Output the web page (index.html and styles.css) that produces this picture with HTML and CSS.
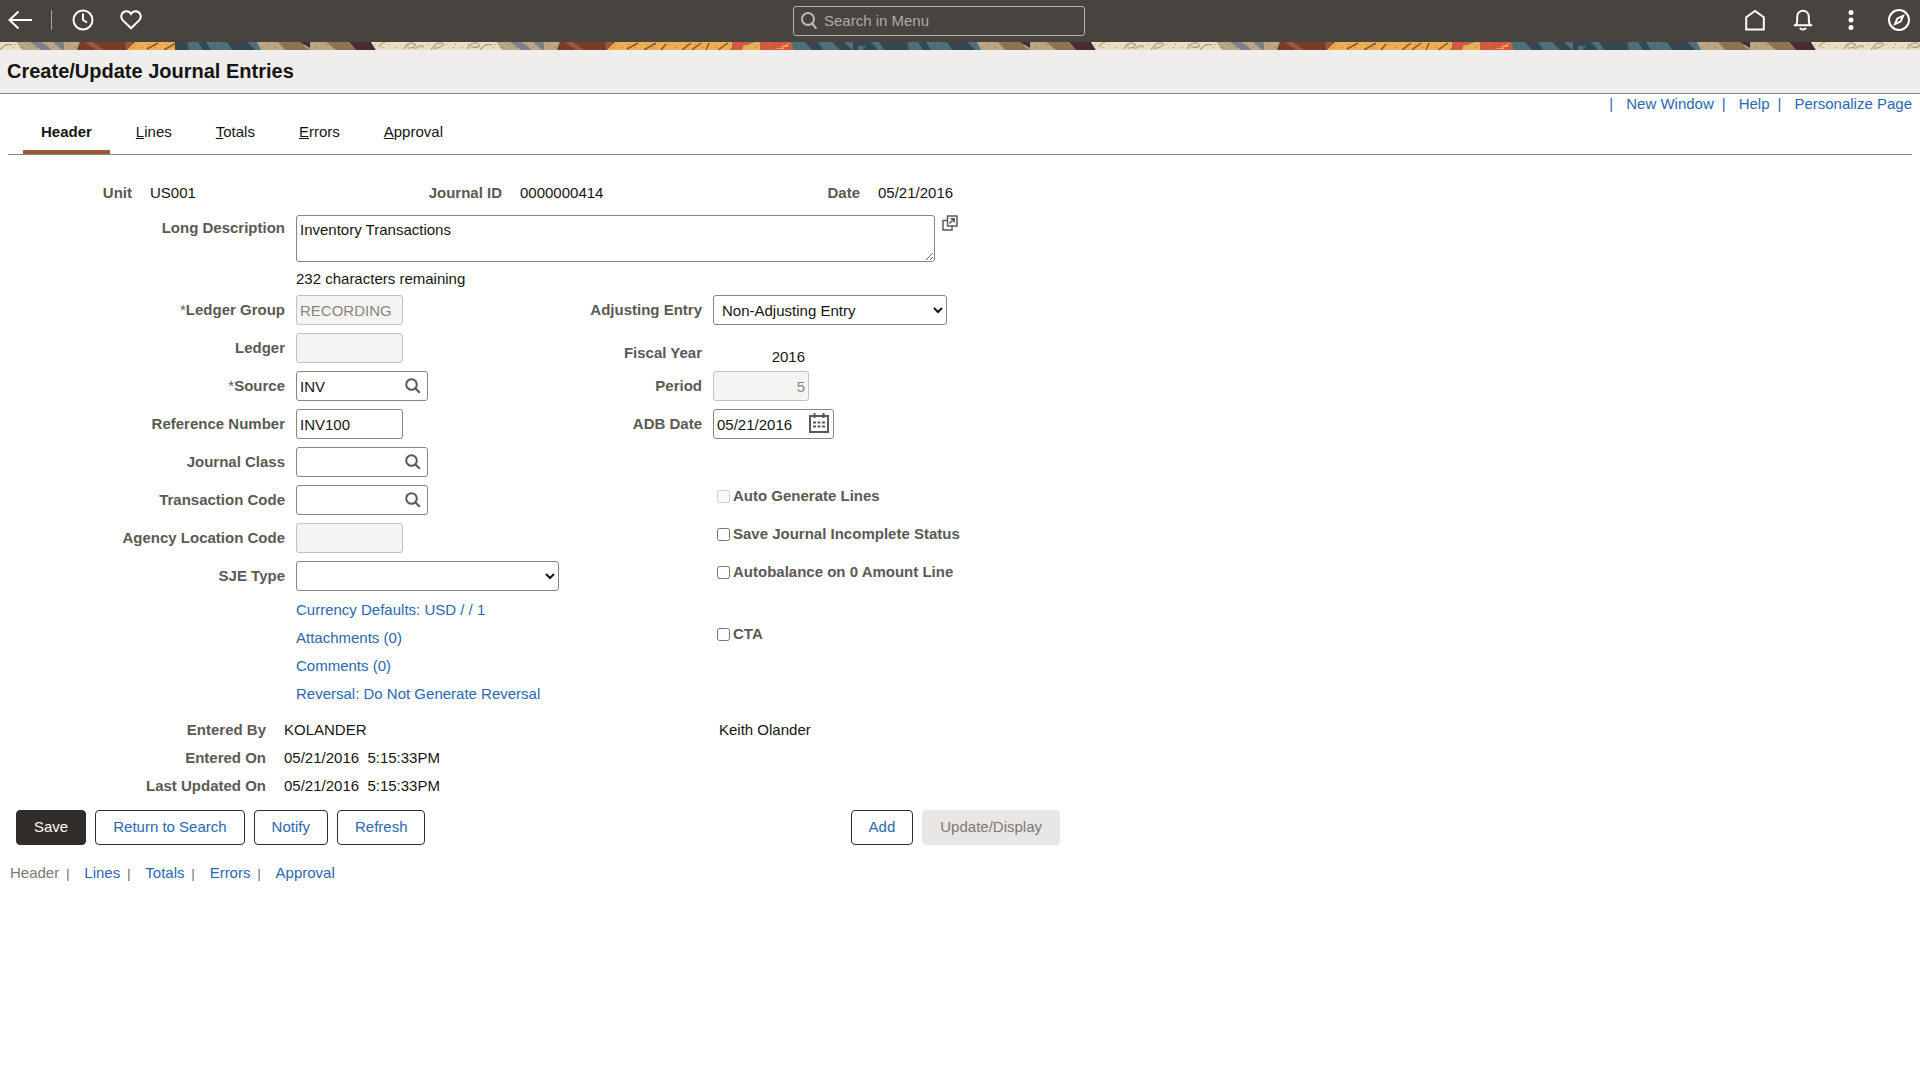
FILE: index.html
```html
<!DOCTYPE html>
<html lang="en">

<head>
  <meta charset="UTF-8">
  <meta name="viewport" content="width=device-width, initial-scale=1">
  <title>Create/Update Journal Entries</title>
  <link rel="stylesheet" href="styles.css">
</head>

<body>
  <header>
    <div class="topbar">
      <div class="topbar-left">
        <button type="button" class="icon-btn" aria-label="Back">
          <svg width="24" height="20" viewBox="0 0 24 20"><path d="M10.500 1.500L1.500 10l9 8.500M1.500 10H24" /></svg>
        </button>
        <span class="divider"></span>
        <button type="button" class="icon-btn" aria-label="Recently visited">
          <svg width="22" height="22" viewBox="0 0 22 22"><circle cx="11" cy="11" r="9.500" /><path d="M11 4.500V11l4 2.500" /></svg>
        </button>
        <button type="button" class="icon-btn" aria-label="Favorites">
          <svg width="22" height="20" viewBox="0 0 22 20"><path d="M11 18.300L2.900 10.400C-.500 6.500 2 1.200 6.300 1.200c2 0 3.700 1 4.700 2.700 1-1.700 2.700-2.700 4.700-2.700 4.300 0 6.800 5.300 3.400 9.200z" /></svg>
        </button>
      </div>
      <div class="menu-search">
        <svg width="16" height="18" viewBox="0 0 16 18"><circle cx="7" cy="7" r="6" /><path d="M11 11.500l4.300 5" /></svg>
        <input type="text" placeholder="Search in Menu" aria-label="Search in Menu">
      </div>
      <div class="topbar-right">
        <button type="button" class="icon-btn" aria-label="Home">
          <svg width="22" height="22" viewBox="0 0 22 22"><path d="M2.200 8.200L11 2l8.800 6.200v12.300H2.200z" /></svg>
        </button>
        <button type="button" class="icon-btn" aria-label="Notifications">
          <svg width="22" height="22" viewBox="0 0 22 22"><path d="M1.800 16.200h18.400M4 16c1-1.500 1.200-3 1.200-5V7.500a5.800 5.800 0 0 1 11.600 0V11c0 2 .200 3.500 1.200 5M8 18.800c1 2.200 5 2.200 6 0" /></svg>
        </button>
        <button type="button" class="icon-btn" aria-label="Actions">
          <svg class="dots" width="22" height="22" viewBox="0 0 22 22"><circle cx="11" cy="3.500" r="2.500" /><circle cx="11" cy="11" r="2.500" /><circle cx="11" cy="18.500" r="2.500" /></svg>
        </button>
        <button type="button" class="icon-btn" aria-label="NavBar">
          <svg width="22" height="22" viewBox="0 0 22 22"><circle cx="11" cy="11" r="10" /><path d="M15 7l-2.400 5.600L7 15l2.400-5.600z" /></svg>
        </button>
      </div>
    </div>
    <!-- woven colour strip, repeats every 720px -->
    <svg class="strip" width="100%" height="8" aria-hidden="true">
      <defs>
        <pattern id="weave" x="175" y="0" width="720" height="8" patternUnits="userSpaceOnUse">
          <rect width="720" height="8" fill="#4d717b" />
          <path fill="#34464e" d="M0 0h12l2 8H0zM23 0h8l5 8h-8zM52 0h20l8 8H57z" />
          <path fill="#b9a684" d="M82 0h122v8H86z" />
          <path fill="#8d7551" d="M103 0h33l-8 4 8 4h-26zM151 0h22l8 8h-20z" />
          <path fill="#4a2c30" d="M125 0h10v6zM174 0h22l5 8h-20z" />
          <path fill="#e8dfc2" d="M196 0h126l5 8H201z" />
          <g fill="none" stroke="#bcab86" stroke-width="1.500">
            <path d="M204 5q3-5 7-5M229 7q7-9 10-5t-6 4M240 7q4-4 9-3M256 8q6-9 11-7t-8 6M292 7q6-9 11-5t-7 3M305 8q5-7 12-5" />
          </g>
          <path fill="#b9a684" d="M322 0h63l-3 8h-55z" />
          <path fill="#817f85" d="M335 0h12l10 8h-11zM358 0h11v8h-2z" />
          <path fill="#793d27" d="M385 0h55l-8 8h-50z" />
          <path fill="#9c5834" d="M390 0h8l11 8h-8zM430 0h8l-4 8h-3z" />
          <path fill="#ebae54" d="M440 0h120v8H432z" />
          <g fill="none" stroke="#8f5428" stroke-width="1.500">
            <path d="M452 7l11-6M469 8l12-7M486 8l5-6M507 8l9-7M517 8l9-7M531 8l3-7M543 8l10-7M556 8l4-5" />
          </g>
          <path fill="#d35b42" d="M557 0h20l-6 3-4 5h-10zM585 0h31l3 8h-34z" />
          <path fill="#ebae54" d="M568 4l12-4h5v8h-18zM605 5l10-4-3 4zM600 7l9-2v2z" />
          <path fill="#34464e" d="M630 0h13l5 8h-11zM657 0h12l8 8h-12zM678 0h18l7 8h-25zM704 0h16v8h-11z" />
          <path fill="#4d717b" d="M683 4h8l-3 4h-5z" />
          <g fill="none" stroke="#4b3b30" stroke-dasharray="1 12 1 17 1 8" opacity=".5">
            <path d="M0 2.500h720M7 5.500h713" />
          </g>
        </pattern>
        <pattern id="weave-start" href="#weave" x="-305" />
      </defs>
      <rect width="100%" height="8" fill="url(#weave)" />
      <rect width="175" height="8" fill="url(#weave-start)" />
    </svg>
    <h1>Create/Update Journal Entries</h1>
  </header>

  <main>
    <div class="page-links">
      <span>|</span><a href="#">New Window</a><span>|</span><a href="#">Help</a><span>|</span><a href="#">Personalize Page</a>
    </div>
    <nav class="tabs">
      <a href="#" class="active">Header</a>
      <a href="#"><u>L</u>ines</a>
      <a href="#"><u>T</u>otals</a>
      <a href="#"><u>E</u>rrors</a>
      <a href="#"><u>A</u>pproval</a>
    </nav>

    <form>
      <div class="keys">
        <span class="label">Unit</span><span>US001</span>
        <span class="label">Journal ID</span><span>0000000414</span>
        <span class="label">Date</span><span>05/21/2016</span>
      </div>

      <div class="description">
        <label for="descr">Long Description</label>
        <textarea id="descr">Inventory Transactions</textarea>
        <button type="button" class="popup" aria-label="Open in popup">
          <svg width="16" height="16" viewBox="0 0 16 16"><path d="M5.500 1h9.500v10H5.500zM5 5.500H1V15h9v-3.500M7.500 8.500l4.500-4.500M8.500 3.800H12.200V7.500" /></svg>
        </button>
        <span class="remaining">232 characters remaining</span>
      </div>

      <div class="columns">
        <div>
          <div class="fields">
            <label for="ledgerGroup"><span class="required">*</span>Ledger Group</label>
            <input type="text" id="ledgerGroup" class="short" value="RECORDING" disabled>
            <label for="ledger">Ledger</label>
            <input type="text" id="ledger" class="short" disabled>
            <label for="source"><span class="required">*</span>Source</label>
            <div class="lookup">
              <input type="text" id="source" value="INV">
              <button type="button" aria-label="Look up Source"><svg width="16" height="16" viewBox="0 0 16 16"><circle cx="6.500" cy="6.500" r="5.300" /><path d="M10.500 10.500l4.300 4.300" /></svg></button>
            </div>
            <label for="refNumber">Reference Number</label>
            <input type="text" id="refNumber" class="short" value="INV100">
            <label for="journalClass">Journal Class</label>
            <div class="lookup">
              <input type="text" id="journalClass">
              <button type="button" aria-label="Look up Journal Class"><svg width="16" height="16" viewBox="0 0 16 16"><circle cx="6.500" cy="6.500" r="5.300" /><path d="M10.500 10.500l4.300 4.300" /></svg></button>
            </div>
            <label for="transCode">Transaction Code</label>
            <div class="lookup">
              <input type="text" id="transCode">
              <button type="button" aria-label="Look up Transaction Code"><svg width="16" height="16" viewBox="0 0 16 16"><circle cx="6.500" cy="6.500" r="5.300" /><path d="M10.500 10.500l4.300 4.300" /></svg></button>
            </div>
            <label for="agencyCode">Agency Location Code</label>
            <input type="text" id="agencyCode" class="short" disabled>
            <label for="sjeType">SJE Type</label>
            <select id="sjeType" class="sje">
              <option></option>
            </select>
          </div>
          <ul class="journal-links">
            <li><a href="#">Currency Defaults: USD / / 1</a></li>
            <li><a href="#">Attachments (0)</a></li>
            <li><a href="#">Comments (0)</a></li>
            <li><a href="#">Reversal: Do Not Generate Reversal</a></li>
          </ul>
        </div>

        <div>
          <div class="fields fields-right">
            <label for="adjusting">Adjusting Entry</label>
            <select id="adjusting" class="adjusting">
              <option>Non-Adjusting Entry</option>
            </select>
            <span class="label year-label">Fiscal Year</span>
            <span class="year">2016</span>
            <label for="period">Period</label>
            <input type="text" id="period" class="period" value="5" disabled>
            <label for="adbDate">ADB Date</label>
            <div class="date">
              <input type="text" id="adbDate" value="05/21/2016">
              <button type="button" aria-label="Choose a date">
                <svg width="20" height="20" viewBox="0 0 20 20"><path d="M1 3h18v16H1zM5.500 0v5M14.500 0v5" /><path class="days" d="M4 9.500h12M4 13.500h12" /></svg>
              </button>
            </div>
          </div>
          <div class="checks">
            <div><input type="checkbox" id="autoGen" disabled><label for="autoGen">Auto Generate Lines</label></div>
            <div><input type="checkbox" id="incomplete"><label for="incomplete">Save Journal Incomplete Status</label></div>
            <div><input type="checkbox" id="autobalance"><label for="autobalance">Autobalance on 0 Amount Line</label></div>
            <div class="cta"><input type="checkbox" id="cta"><label for="cta">CTA</label></div>
          </div>
        </div>
      </div>

      <div class="audit">
        <span class="label">Entered By</span><span>KOLANDER</span><span>Keith Olander</span>
        <span class="label">Entered On</span><span class="stamp">05/21/2016  5:15:33PM</span><span></span>
        <span class="label">Last Updated On</span><span class="stamp">05/21/2016  5:15:33PM</span><span></span>
      </div>

      <div class="buttons">
        <div class="group">
          <button type="button" class="btn primary">Save</button>
          <button type="button" class="btn">Return to Search</button>
          <button type="button" class="btn">Notify</button>
          <button type="button" class="btn">Refresh</button>
        </div>
        <div class="group">
          <button type="button" class="btn">Add</button>
          <button type="button" class="btn" disabled>Update/Display</button>
        </div>
      </div>
    </form>

    <nav class="bottom-links">
      <span class="current">Header</span><span class="bar">|</span><a href="#">Lines</a><span class="bar">|</span><a href="#">Totals</a><span class="bar">|</span><a href="#">Errors</a><span class="bar">|</span><a href="#">Approval</a>
    </nav>
  </main>
</body>

</html>
```

FILE: styles.css
```css
* {
  box-sizing: border-box;
}

body,
h1,
ul {
  margin: 0;
  padding: 0;
}

ul {
  list-style: none;
}

body {
  background: #fff;
  color: #161513;
  font: 15px/20px "Liberation Sans", Arial, sans-serif;
}

a {
  color: #2b68b0;
  text-decoration: none;
}

button,
input,
select,
textarea {
  font: inherit;
  color: inherit;
  margin: 0;
}

svg {
  display: block;
  fill: none;
}

/* top bar */
.topbar {
  display: flex;
  align-items: center;
  height: 42px;
  padding-bottom: 2px;
  background: #47433e;
}

.topbar-left,
.topbar-right {
  display: flex;
  flex: 1;
  align-items: center;
  gap: 26px;
}

.topbar-left {
  padding-left: 8px;
}

.topbar-right {
  justify-content: flex-end;
  padding-left: 40px;
  padding-right: 10px;
}

.icon-btn {
  padding: 0;
  border: 0;
  background: none;
}

.icon-btn svg {
  stroke: #fff;
  stroke-width: 2;
}

.icon-btn .dots {
  fill: #fff;
  stroke: none;
}

.divider {
  width: 1px;
  height: 20px;
  margin: 0 -6px 0 -7px;
  background: #aaa7a3;
}

.menu-search {
  display: flex;
  align-items: center;
  gap: 7px;
  width: 292px;
  height: 30px;
  margin-top: 2px;
  padding-left: 7px;
  border: 1px solid #b5b2ae;
  border-radius: 3px;
}

.menu-search svg {
  stroke: #bcb9b5;
  stroke-width: 2;
}

.menu-search input {
  flex: 1;
  min-width: 0;
  padding: 0;
  color: #fff;
}

.menu-search input::placeholder {
  color: #aeaba7;
}

h1 {
  padding: 9px 7px 10px;
  background: #f0eeec;
  border-bottom: 1px solid #8b8580;
  font-size: 20px;
  line-height: 24px;
}

/* page links and tabs */
main {
  padding: 0 8px;
}

.page-links {
  text-align: right;
}

.page-links span {
  padding: 0 13px 0 8px;
  color: #2b68b0;
}

.tabs {
  display: flex;
  gap: 8px;
  padding-left: 15px;
  border-bottom: 1px solid #8b8580;
}

.tabs a {
  padding: 8px 18px;
  border-bottom: 4px solid transparent;
  color: #161513;
}

.tabs .active {
  border-color: #985935;
  font-weight: bold;
}

/* form */
label,
.label {
  color: #5c5955;
  font-weight: bold;
}

.required {
  font-weight: normal;
}

input[type="text"],
select,
textarea {
  border: 1px solid #8b8580;
  border-radius: 3px;
  background: #fff;
}

.menu-search input[type="text"] {
  border: 0;
  background: none;
}

.fields input,
.fields select {
  height: 30px;
  padding: 0 4px;
}

.fields input:disabled {
  border-color: #c4c1bd;
  background: #f5f4f2;
  color: #8b8580;
}

.keys {
  display: grid;
  grid-template-columns: 124px 250px 84px 260px 62px auto;
  column-gap: 18px;
  margin: 28px 0 12px;
}

.keys .label,
.audit .label {
  text-align: right;
}

.description {
  display: grid;
  grid-template-columns: 277px 639px auto;
  gap: 7px 11px;
  align-items: start;
  margin-bottom: 6px;
}

.description label {
  padding-top: 3px;
  text-align: right;
}

.description textarea {
  height: 47px;
  padding: 4px 3px;
}

.popup {
  width: 16px;
  margin-left: -4px;
  padding: 0;
  border: 0;
  background: none;
}

.popup svg {
  stroke: #5c5955;
  stroke-width: 1.5;
}

.remaining {
  grid-column: 2;
}

.columns {
  display: flex;
}

.fields {
  display: grid;
  grid-template-columns: 277px 263px;
  grid-auto-rows: 30px;
  gap: 8px 11px;
  align-items: center;
}

.fields input,
.fields .lookup input {
  padding: 0 3px;
}

.fields label,
.fields .label {
  text-align: right;
}

.fields-right {
  grid-template-columns: 143px 234px;
}

.short {
  width: 107px;
}

.lookup {
  position: relative;
  width: 132px;
}

.lookup input {
  width: 100%;
}

.lookup button,
.date button {
  position: absolute;
  top: 7px;
  right: 7px;
  padding: 0;
  border: 0;
  background: none;
}

.lookup svg {
  stroke: #5c5955;
  stroke-width: 2;
}

.sje,
.adjusting {
  width: 100%;
}

.fields .year-label {
  align-self: start;
  padding-top: 10px;
}

.year {
  align-self: end;
  width: 92px;
  line-height: 12px;
  text-align: right;
}

.period {
  width: 96px;
  text-align: right;
}

.date {
  position: relative;
  width: 121px;
}

.date input {
  width: 100%;
}

.date button {
  top: 4px;
  right: 5px;
}

.date svg {
  stroke: #5c5955;
  stroke-width: 2;
}

.date .days {
  stroke-dasharray: 3 1.5;
}

.journal-links {
  padding: 5px 0 0 288px;
  line-height: 28px;
}

.checks {
  display: grid;
  grid-auto-rows: 30px;
  row-gap: 8px;
  margin-top: 42px;
  padding-left: 158px;
}

.checks div {
  display: flex;
  align-items: center;
  gap: 3px;
}

.checks input {
  width: 13px;
  height: 13px;
}

.checks .cta {
  margin-top: 24px;
  height: 30px;
}

.audit {
  display: grid;
  grid-template-columns: 258px 417px auto;
  column-gap: 18px;
  margin-top: 8px;
  line-height: 28px;
}

.stamp {
  white-space: pre;
}

/* buttons */
.buttons {
  display: flex;
  justify-content: space-between;
  max-width: 1052px;
  margin: 10px 0 18px;
  padding-left: 8px;
}

.group {
  display: flex;
  gap: 9px;
}

.btn {
  height: 35px;
  padding: 0 17px 2px;
  border: 1px solid #312d2a;
  border-radius: 4px;
  background: #fff;
  color: #2b68b0;
}

.btn.primary {
  background: #312d2a;
  color: #fff;
}

.btn:disabled {
  border-color: #e8e7e5;
  background: #e8e7e5;
  color: #7d7873;
}

.bottom-links {
  padding-left: 2px;
}

.bottom-links .current {
  color: #7d7873;
}

.bottom-links .bar {
  padding: 0 15px 0 7px;
  color: #5c5955;
  font-size: 12px;
}
```
